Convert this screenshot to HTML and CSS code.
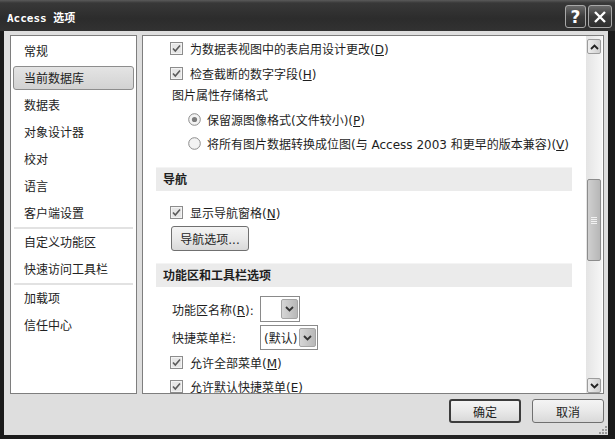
FILE: index.html
```html
<!DOCTYPE html>
<html lang="zh-CN">
<head>
    <meta charset="UTF-8">
    <title>Access 选项</title>
    <link rel="stylesheet" href="styles.css">
</head>
<body>
<div class="window">
    <div class="titlebar">
        <span class="title">Access 选项</span>
        <div class="caption">
            <span class="cap-btn help">?</span>
            <span class="cap-btn close">
                <svg width="14" height="14" viewBox="0 0 14 14"><path d="M2 2 L12 12 M12 2 L2 12" stroke="#fff" stroke-width="2.4"/></svg>
            </span>
        </div>
    </div>

    <div class="client">
        <div class="main">
            <ul class="nav">
                <li>常规</li>
                <li class="active">当前数据库</li>
                <li>数据表</li>
                <li>对象设计器</li>
                <li>校对</li>
                <li>语言</li>
                <li>客户端设置</li>
                <li class="sep"></li>
                <li>自定义功能区</li>
                <li>快速访问工具栏</li>
                <li class="sep"></li>
                <li>加载项</li>
                <li>信任中心</li>
            </ul>

            <div class="pane">
                <div class="content">
                    <div class="row">
                        <svg class="chk" width="13" height="13" viewBox="0 0 13 13"><rect x="0.5" y="0.5" width="12" height="12" fill="#f3f3f3" stroke="#8c8c8c"/><rect x="2" y="2" width="9" height="9" fill="#e6e6e6"/><path d="M3 6.5 L5.3 9 L10 3.5" fill="none" stroke="#5a5a5a" stroke-width="1.6"/></svg>
                        <span>为数据表视图中的表启用设计更改(<u>D</u>)</span>
                    </div>
                    <div class="row">
                        <svg class="chk" width="13" height="13" viewBox="0 0 13 13"><rect x="0.5" y="0.5" width="12" height="12" fill="#f3f3f3" stroke="#8c8c8c"/><rect x="2" y="2" width="9" height="9" fill="#e6e6e6"/><path d="M3 6.5 L5.3 9 L10 3.5" fill="none" stroke="#5a5a5a" stroke-width="1.6"/></svg>
                        <span>检查截断的数字字段(<u>H</u>)</span>
                    </div>
                    <div class="label-row">图片属性存储格式</div>
                    <div class="radio-row">
                        <svg width="13" height="13" viewBox="0 0 13 13"><circle cx="6.5" cy="6.5" r="5.8" fill="#f3f3f3" stroke="#8c8c8c"/><circle cx="6.5" cy="6.5" r="2.6" fill="#7c7c7c"/></svg>
                        <span>保留源图像格式(文件较小)(<u>P</u>)</span>
                    </div>
                    <div class="radio-row">
                        <svg width="13" height="13" viewBox="0 0 13 13"><circle cx="6.5" cy="6.5" r="5.8" fill="#f3f3f3" stroke="#8c8c8c"/></svg>
                        <span>将所有图片数据转换成位图(与 Access 2003 和更早的版本兼容)(<u>V</u>)</span>
                    </div>

                    <div class="section-head">导航</div>
                    <div class="row">
                        <svg class="chk" width="13" height="13" viewBox="0 0 13 13"><rect x="0.5" y="0.5" width="12" height="12" fill="#f3f3f3" stroke="#8c8c8c"/><rect x="2" y="2" width="9" height="9" fill="#e6e6e6"/><path d="M3 6.5 L5.3 9 L10 3.5" fill="none" stroke="#5a5a5a" stroke-width="1.6"/></svg>
                        <span>显示导航窗格(<u>N</u>)</span>
                    </div>
                    <div class="btn-row"><span class="btn">导航选项...</span></div>

                    <div class="section-head">功能区和工具栏选项</div>
                    <div class="combo-row first">
                        <span class="combo-label">功能区名称(<u>R</u>):</span>
                        <span class="combo small"><span class="drop"><svg width="9" height="6" viewBox="0 0 9 6"><path d="M1 1 L4.5 4.5 L8 1" fill="none" stroke="#333" stroke-width="1.8"/></svg></span></span>
                    </div>
                    <div class="combo-row">
                        <span class="combo-label">快捷菜单栏:</span>
                        <span class="combo wide">(默认)<span class="drop"><svg width="9" height="6" viewBox="0 0 9 6"><path d="M1 1 L4.5 4.5 L8 1" fill="none" stroke="#333" stroke-width="1.8"/></svg></span></span>
                    </div>
                    <div class="row">
                        <svg class="chk" width="13" height="13" viewBox="0 0 13 13"><rect x="0.5" y="0.5" width="12" height="12" fill="#f3f3f3" stroke="#8c8c8c"/><rect x="2" y="2" width="9" height="9" fill="#e6e6e6"/><path d="M3 6.5 L5.3 9 L10 3.5" fill="none" stroke="#5a5a5a" stroke-width="1.6"/></svg>
                        <span>允许全部菜单(<u>M</u>)</span>
                    </div>
                    <div class="row">
                        <svg class="chk" width="13" height="13" viewBox="0 0 13 13"><rect x="0.5" y="0.5" width="12" height="12" fill="#f3f3f3" stroke="#8c8c8c"/><rect x="2" y="2" width="9" height="9" fill="#e6e6e6"/><path d="M3 6.5 L5.3 9 L10 3.5" fill="none" stroke="#5a5a5a" stroke-width="1.6"/></svg>
                        <span>允许默认快捷菜单(E)</span>
                    </div>
                </div>

                <div class="scrollbar">
                    <span class="sb-btn"><svg width="9" height="6" viewBox="0 0 9 6"><path d="M1 5 L4.5 1.5 L8 5" fill="none" stroke="#222" stroke-width="1.8"/></svg></span>
                    <span class="thumb"><span class="grip"></span></span>
                    <span class="sb-btn down"><svg width="9" height="6" viewBox="0 0 9 6"><path d="M1 1 L4.5 4.5 L8 1" fill="none" stroke="#222" stroke-width="1.8"/></svg></span>
                </div>
            </div>
        </div>

        <div class="footer">
            <span class="btn dialog-btn default">确定</span>
            <span class="btn dialog-btn">取消</span>
        </div>
        <svg class="grip-corner" width="9" height="9" viewBox="0 0 9 9">
            <rect x="7" y="1" width="2" height="2" fill="#9a9a9a"/>
            <rect x="4" y="4" width="2" height="2" fill="#9a9a9a"/>
            <rect x="7" y="4" width="2" height="2" fill="#9a9a9a"/>
            <rect x="1" y="7" width="2" height="2" fill="#9a9a9a"/>
            <rect x="4" y="7" width="2" height="2" fill="#9a9a9a"/>
            <rect x="7" y="7" width="2" height="2" fill="#9a9a9a"/>
        </svg>
    </div>
</div>
</body>
</html>
```

FILE: styles.css
```css
body {
    margin: 0;
    background-color: #202020;
    font-family: "DejaVu Sans", "Noto Sans CJK SC", sans-serif;
    font-size: 12px;
    color: #1e1e1e;
}
.window {
    width: 615px;
    height: 439px;
    display: flex;
    flex-direction: column;
    background: linear-gradient(to right, #1a1a1a, #2a2a2a 50%, #1a1a1a);
}
.titlebar {
    height: 31px;
    display: flex;
    justify-content: space-between;
    align-items: flex-start;
    background: linear-gradient(#5a5a5a, #383838 3px, #2c2c2c 60%, #323232);
}
.title {
    margin: 9px 0 0 7px;
    font-family: "DejaVu Sans Mono", "Noto Sans CJK SC", monospace;
    font-weight: bold;
    font-size: 11px;
    color: #fff;
}
.caption {
    display: flex;
    gap: 2px;
    margin: 5px 3px 0 0;
}
.cap-btn {
    height: 21px;
    display: flex;
    align-items: center;
    justify-content: center;
    border: 1px solid #a8a8a8;
    border-radius: 3px;
    background: linear-gradient(#6a6a6a, #3c3c3c 50%, #2e2e2e);
    color: #fff;
    font-weight: bold;
    font-size: 17px;
}
.help {
    width: 19px;
}
.close {
    width: 22px;
}
.client {
    position: relative;
    flex: 1;
    margin: 0 7px 4px 4px;
    display: flex;
    flex-direction: column;
    background-color: #dedede;
}
.main {
    height: 363px;
    display: flex;
    gap: 5px;
    padding: 4px 4px 0 6px;
    box-sizing: border-box;
}
.nav {
    width: 127px;
    margin: 0;
    padding: 3px 0 0;
    list-style: none;
    box-sizing: border-box;
    background-color: #fff;
    border: 1px solid #7e7e7e;
}
.nav li {
    height: 24px;
    line-height: 24px;
    margin: 0 2px 3px;
    padding-left: 10px;
    border: 1px solid transparent;
    box-sizing: border-box;
    font-size: 12px;
    color: #222;
}
.nav li.active {
    border-color: #8d8d8d;
    border-radius: 3px;
    background: linear-gradient(#e4e4e4, #d2d2d2);
}
.nav li.sep {
    height: 2px;
    margin: -1px 3px 1px;
    padding: 0;
    border: none;
    background-color: #e2e2e2;
}
.pane {
    flex: 1;
    display: flex;
    background-color: #fff;
    border: 1px solid #7e7e7e;
}
.content {
    flex: 1;
    overflow: hidden;
}
.row {
    height: 24px;
    display: flex;
    align-items: center;
    gap: 7px;
    padding-left: 27px;
}
.row:first-child {
    height: 25px;
}
.label-row {
    height: 22px;
    line-height: 22px;
    padding-left: 29px;
}
.radio-row {
    height: 24px;
    display: flex;
    align-items: center;
    gap: 6px;
    padding-left: 45px;
}
.section-head {
    height: 24px;
    line-height: 24px;
    margin: 12px 14px 9px 13px;
    padding-left: 7px;
    background-color: #ebebeb;
    border-top: 1px solid #f4f4f4;
    box-sizing: border-box;
    font-weight: bold;
}
.btn-row {
    margin: 2px 0 3px 28px;
}
.btn {
    display: inline-flex;
    align-items: center;
    justify-content: center;
    box-sizing: border-box;
    border: 1px solid #707070;
    border-radius: 3px;
    background: linear-gradient(#f4f4f4, #e9e9e9 50%, #d9d9d9);
}
.btn-row .btn {
    width: 78px;
    height: 25px;
}
.combo-row {
    height: 25px;
    display: flex;
    align-items: center;
    padding-left: 29px;
    margin-top: 3px;
}
.combo-row.first {
    height: 26px;
    margin-top: 2px;
}
.combo-label {
    width: 88px;
}
.combo {
    position: relative;
    height: 100%;
    display: flex;
    align-items: center;
    padding-left: 3px;
    box-sizing: border-box;
    border: 1px solid #8a8a8a;
    background-color: #fff;
}
.combo.small {
    width: 40px;
}
.combo.wide {
    width: 58px;
}
.drop {
    position: absolute;
    top: 2px;
    right: 1px;
    bottom: 2px;
    width: 17px;
    display: flex;
    align-items: center;
    justify-content: center;
    box-sizing: border-box;
    border: 1px solid #a4a4a4;
    border-radius: 2px;
    background: linear-gradient(to right, #d6d6d6, #b8b8b8);
}
.scrollbar {
    width: 16px;
    margin-right: 1px;
    display: flex;
    flex-direction: column;
    align-items: center;
    padding-top: 3px;
    box-sizing: border-box;
    background: linear-gradient(to right, #e4e4e4, #f6f6f6);
}
.sb-btn {
    width: 14px;
    height: 15px;
    display: flex;
    align-items: center;
    justify-content: center;
    box-sizing: border-box;
    border: 1px solid #9c9c9c;
    border-radius: 2px;
    background: linear-gradient(to right, #eeeeee, #cfcfcf);
}
.sb-btn.down {
    margin-top: auto;
    margin-bottom: 0;
}
.thumb {
    width: 14px;
    height: 82px;
    margin-top: 125px;
    display: flex;
    align-items: center;
    justify-content: center;
    box-sizing: border-box;
    border: 1px solid #8c8c8c;
    border-radius: 2px;
    background: linear-gradient(to right, #cfcfcf, #b7b7b7);
}
.grip {
    width: 6px;
    height: 7px;
    background: repeating-linear-gradient(#f2f2f2 0 1px, transparent 1px 2px);
}
.footer {
    flex: 1;
    display: flex;
    justify-content: flex-end;
    gap: 11px;
    padding: 5px 4px 0 0;
}
.dialog-btn {
    width: 72px;
    height: 24px;
    font-size: 12px;
}
.dialog-btn.default {
    border: 2px solid #3c3c3c;
}
.grip-corner {
    position: absolute;
    right: 1px;
    bottom: 1px;
}
```
